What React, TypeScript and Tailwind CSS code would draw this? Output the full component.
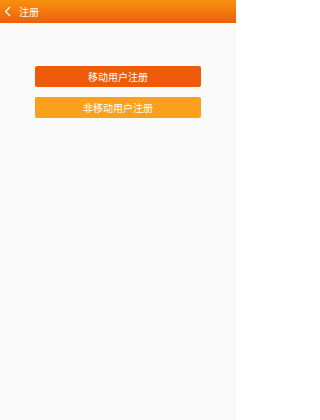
export default function App() {
  return (
    <div
      className="flex flex-col w-[236px] h-[420px] bg-[#fafafa]"
      style={{ fontFamily: '"Noto Sans CJK SC", "Noto Sans", sans-serif' }}
    >
      {/* Header */}
      <header className="h-[23px] flex items-center bg-gradient-to-b from-[#f8900f] to-[#ec5f0b] text-white">
        <svg width="16" height="23" viewBox="0 0 16 23" className="shrink-0">
          <path d="M10 7 L5.5 11.5 L10 16" fill="none" stroke="white" strokeWidth="1.2" />
        </svg>
        <span className="ml-[3px] text-[10px] leading-none">注册</span>
      </header>

      <main className="flex flex-col gap-[10px] px-[35px] pt-[43px]">
        <button className="h-[21px] rounded-[2px] bg-[#ee5b0a] text-white text-[10px] leading-none">
          移动用户注册
        </button>
        <button className="h-[21px] rounded-[2px] bg-[#fba01d] text-white text-[10px] leading-none">
          非移动用户注册
        </button>
      </main>
    </div>
  );
}
